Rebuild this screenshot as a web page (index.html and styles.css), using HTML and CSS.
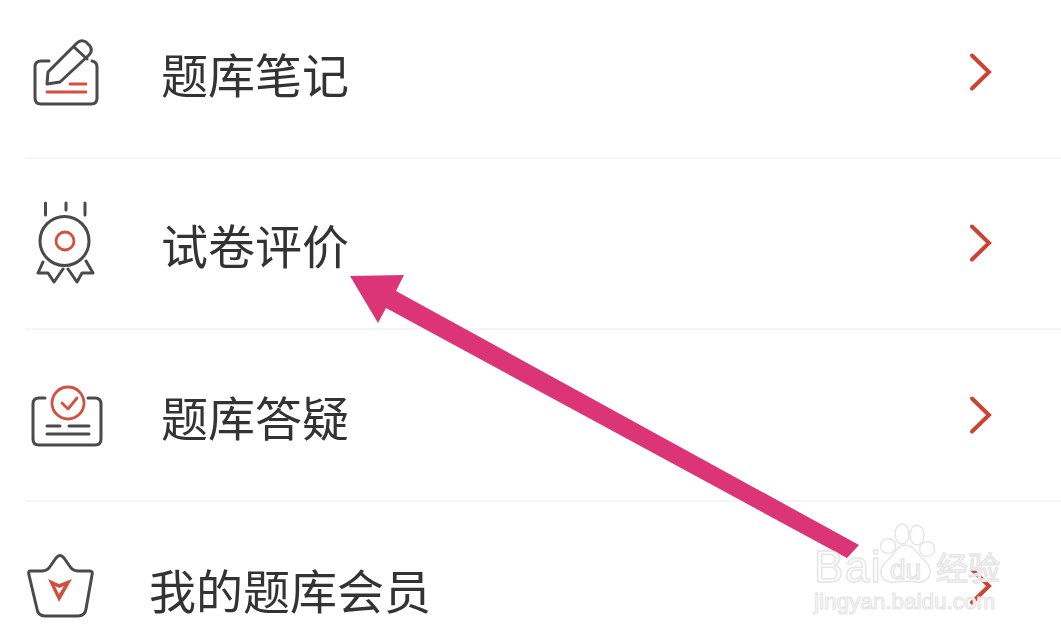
FILE: index.html
```html
<!DOCTYPE html>
<html lang="zh">
<head>
<meta charset="utf-8">
<title>题库</title>
<link rel="stylesheet" href="styles.css">
</head>
<body>
<ul class="menu">
  <li class="row">
    <svg class="icon" viewBox="20 22 100 100">
      <path class="ink" d="M49 61h-8q-6 0-6 6v31q0 6 6 6h50q6 0 6-6V67q0-5-5-6"/>
      <path class="ink" d="M47 84l1-12 29-29q4-4 9-1l4 4q3 5-1 9L60 82zM74 47l13 12"/>
      <path class="red" d="M70 84h16M47 92h39"/>
    </svg>
    <span class="label">题库笔记</span>
    <svg class="chevron" viewBox="0 0 24 40"><path d="M4 3.500l17 16.500L4 36.500"/></svg>
  </li>
  <li class="row">
    <svg class="icon" viewBox="20 194 100 100">
      <path class="ink" d="M45.500 204v12M66 204v7M85 204v12"/>
      <circle class="ink" cx="64.500" cy="242" r="24.500"/>
      <circle class="red" cx="65" cy="242" r="9"/>
      <path class="ink" d="M43 263l-5 11h10l6 9 9-13M68 270l9 13 5-9h11l-7-12"/>
    </svg>
    <span class="label">试卷评价</span>
    <svg class="chevron" viewBox="0 0 24 40"><path d="M4 3.500l17 16.500L4 36.500"/></svg>
  </li>
  <li class="row">
    <svg class="icon" viewBox="20 365 100 100">
      <path class="ink" d="M45 398h-6q-6 0-6 6v35q0 6 6 6h56q6 0 6-6v-35q0-6-6-6h-7"/>
      <path class="ink" d="M47 426h13M69 426h20M47 434h42"/>
      <circle class="red" cx="68" cy="403" r="16"/>
      <path class="red" d="M62 403l6 6 9-11"/>
    </svg>
    <span class="label">题库答疑</span>
    <svg class="chevron" viewBox="0 0 24 40"><path d="M4 3.500l17 16.500L4 36.500"/></svg>
  </li>
  <li class="row row-last">
    <svg class="icon" viewBox="20 536 100 100">
      <path class="ink" d="M30 571h12q4 0 7-3l7-10q4-5 8 0l7 10q3 3 7 3h12q3 0 2 4l-6 34q-1 7-8 7H45q-7 0-8-7l-8-34q-1-4 1-4z"/>
      <path class="red fill" d="M48 579l11 5 13-5-13 23zM55 586l4 8 5-8-5 2z"/>
    </svg>
    <span class="label">我的题库会员</span>
    <svg class="chevron" viewBox="0 0 24 40"><path d="M4 3.500l17 16.500L4 36.500"/></svg>
  </li>
</ul>
<svg class="overlay" viewBox="0 0 1061 636">
  <path class="arrow" d="M350 276l54-1-8 16 463 254-12 13-461-250-8 15z"/>
  <g class="mark">
    <circle cx="888" cy="546" r="7.500"/>
    <ellipse cx="902" cy="534" rx="7" ry="10"/>
    <ellipse cx="917" cy="535" rx="7" ry="10"/>
    <circle cx="927" cy="549" r="7.500"/>
    <path d="M905 545c8 0 11 7 17 13 8 7 9 12 8 16-2 7-9 9-14 8-6-1-14-1-20 0-6 1-13-1-15-8-1-6 2-10 8-15 6-5 8-14 16-14z"/>
    <text class="mark-bai" x="814" y="582">Bai</text>
    <text class="mark-du" x="890" y="579">du</text>
    <text class="mark-cn" x="936" y="580">经验</text>
    <text class="mark-url" x="814" y="609">jingyan.baidu.com</text>
  </g>
</svg>
</body>
</html>
```
FILE: styles.css
```css
html, body {
  margin: 0;
  height: 636px;
  overflow: hidden;
  background: #fff;
}
.menu {
  list-style: none;
  margin: -14px 0 0;
  padding: 0;
  display: flex;
  flex-direction: column;
  width: 1061px;
}
.row {
  position: relative;
  flex: 0 0 171.5px;
  box-sizing: border-box;
  display: flex;
  align-items: center;
}
.row::after {
  content: "";
  position: absolute;
  left: 25px;
  right: 0;
  top: 100%;
  height: 2px;
  margin-top: -1px;
  background: #f5f5f5;
}
.row-last {
  flex-basis: 135px;
  align-items: flex-start;
}
.row-last::after { display: none; }
.icon {
  flex: none;
  width: 100px;
  height: 100px;
  margin-left: 20px;
  fill: none;
  filter: blur(0.4px);
}
.row-last .icon { margin-top: 35px; }
.ink {
  stroke: #4a4a4a;
  stroke-width: 3;
  stroke-linecap: round;
  stroke-linejoin: round;
  fill: none;
}
.red {
  stroke: #d2503f;
  stroke-width: 2.800;
  stroke-linecap: round;
  stroke-linejoin: round;
  fill: none;
}
.red.fill {
  fill: #d2503f;
  fill-rule: evenodd;
  stroke: none;
}
.label {
  margin-left: 41px;
  margin-top: 2px;
  font-family: "Noto Sans CJK SC", "Noto Sans", sans-serif;
  font-size: 47px;
  line-height: 60px;
  color: #333;
  filter: blur(0.3px);
}
.row-last .label {
  margin-left: 29px;
  margin-top: 58px;
}
.chevron {
  flex: none;
  margin-left: auto;
  margin-right: 69px;
  width: 24px;
  height: 40px;
  fill: none;
  stroke: #cb4433;
  stroke-width: 4;
  stroke-linecap: round;
  stroke-linejoin: miter;
  filter: blur(0.4px);
}
.row-last .chevron { margin-top: 65px; }
.overlay {
  position: absolute;
  left: 0;
  top: 0;
  width: 1061px;
  height: 636px;
}
.arrow { fill: #dc3577; }
.mark {
  fill: #fff;
  stroke: #e6e6e6;
  stroke-width: 1.500;
  font-family: "Liberation Sans", sans-serif;
}
.mark-bai { font-size: 44px; letter-spacing: 1.500px; }
.mark-du { font-size: 28px; }
.mark-cn { font-size: 32px; font-family: "Noto Sans CJK SC", sans-serif; }
.mark-url { font-size: 22.500px; stroke-width: 1.200px; }
```
